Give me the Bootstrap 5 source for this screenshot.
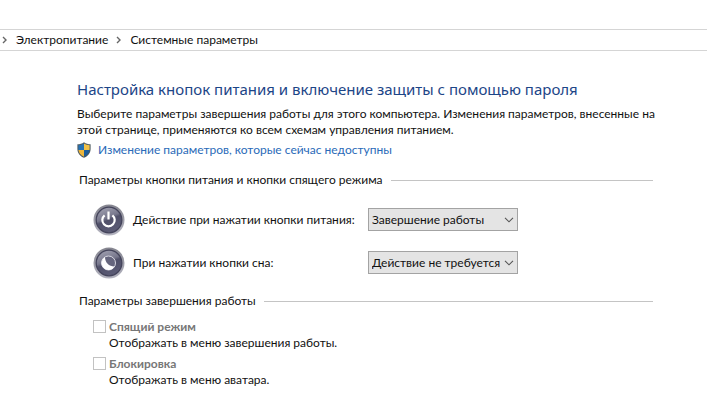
<!DOCTYPE html>
<html lang="ru">
<head>
<meta charset="utf-8">
<meta name="viewport" content="width=device-width, initial-scale=1">
<title>Системные параметры</title>
<link href="https://cdn.jsdelivr.net/npm/bootstrap@5.3.0/dist/css/bootstrap.min.css" rel="stylesheet">
<style>
body { font-family: Lato, "Noto Sans", sans-serif; font-size: 12px; line-height: 16px; color: #111; background: #fff; }
.address-bar { margin-top: 29px; height: 22px; border-top: 1px solid #d5d5d5; border-bottom: 1px solid #d5d5d5; padding-left: 2px; }
.address-bar a { color: #111; }
.sep { width: 5px; height: 8px; margin-right: 9px; fill: none; stroke: #666; stroke-width: 1.4; }
.settings { padding: 26px 48px 8px 77px; }
.page-title { font-family: "Noto Sans", sans-serif; font-size: 15px; line-height: 24px; color: #1c4587; font-weight: 400; margin-bottom: 5px; }
.admin-link { color: #2a6ab8; }
.shield { width: 14px; height: 16px; margin-right: 7px; }
.button-group { padding-top: 10px; }
.shutdown-group { padding-top: 14px; }
.group-head { padding-left: 2px; }
.group-title { font-size: 12px; line-height: 16px; font-weight: 400; }
.group-line { height: 1px; background: #c4c4c4; margin-right: 6px; }
.rows { padding-top: 15px; row-gap: 10px; }
.checks { padding-top: 9px; }
.round-icon { width: 32px; height: 32px; }
.setting-row { height: 33px; }
.setting-label { width: 235px; }
.combo { width: 150px; height: 23px; padding: 0 16px 0 3px; border: 1px solid #a3a3a3; border-radius: 0; font-size: 12px; line-height: 16px; color: #111;
  background: #e4e4e4 url("data:image/svg+xml,%3Csvg xmlns='http://www.w3.org/2000/svg' viewBox='0 0 10 6'%3E%3Cpath d='M1 .8l4 4 4-4' fill='none' stroke='%23555' stroke-width='1.1'/%3E%3C/svg%3E") no-repeat right 3px center / 10px 6px; }
.check { min-height: 0; padding-left: 16px; }
.check .check-box { width: 13px; height: 13px; margin: 2px 0 0 -16px; border: 1px solid #c2c2c2; border-radius: 0; opacity: 1; }
.check .check-box:disabled ~ .check-label { color: #777; opacity: 1; font-weight: 700; line-height: 17px; }
</style>
</head>
<body>
<nav class="address-bar d-flex align-items-center" aria-label="Путь">
  <ol class="list-unstyled d-flex align-items-center mb-0">
    <li class="d-flex align-items-center"><svg class="sep" viewBox="0 0 5 8" aria-hidden="true"><path d="M1 1l3 3-3 3"/></svg><a class="text-decoration-none" href="#">Электропитание</a></li>
    <li class="d-flex align-items-center ms-2"><svg class="sep" viewBox="0 0 5 8" aria-hidden="true"><path d="M1 1l3 3-3 3"/></svg><a class="text-decoration-none" href="#">Системные параметры</a></li>
  </ol>
</nav>
<main class="settings">
  <h1 class="page-title">Настройка кнопок питания и включение защиты с помощью пароля</h1>
  <p class="intro mb-1">Выберите параметры завершения работы для этого компьютера. Изменения параметров, внесенные на этой странице, применяются ко всем схемам управления питанием.</p>
  <a class="admin-link d-inline-flex align-items-center text-decoration-none" href="#">
    <svg class="shield" viewBox="0 0 14 16" aria-hidden="true">
      <clipPath id="shieldClip"><path d="M7 1.600C5.300 2.700 3.300 3.300 1.400 3.300V7c0 3.700 2.500 6.300 5.600 7.700 3.100-1.400 5.600-4 5.600-7.700V3.300C10.700 3.300 8.700 2.700 7 1.600z"/></clipPath>
      <path d="M7 .3C5.200 1.700 2.700 2.300.4 2.300V7c0 4.300 3 7.300 6.600 8.800 3.600-1.500 6.600-4.500 6.600-8.800V2.300C11.300 2.300 8.800 1.700 7 .3z" fill="#4d5a60"/>
      <g clip-path="url(#shieldClip)"><path fill="#2672b5" d="M0 0h7v8H0z"/><path fill="#f2c146" d="M7 0h7v8H7z"/><path fill="#eeb63a" d="M0 8h7v8H0z"/><path fill="#1c5d9c" d="M7 8h7v8H7z"/></g>
    </svg>
    <span>Изменение параметров, которые сейчас недоступны</span>
  </a>

  <section class="button-group">
    <div class="group-head d-flex align-items-center gap-2">
      <h2 class="group-title mb-0">Параметры кнопки питания и кнопки спящего режима</h2>
      <div class="group-line flex-grow-1"></div>
    </div>
    <div class="rows d-grid ps-3">
      <div class="setting-row d-flex align-items-center">
        <svg class="round-icon me-2" viewBox="0 0 32 32" aria-hidden="true">
          <defs>
            <linearGradient id="rim" x2="0" y2="1"><stop stop-color="#85858f"/><stop offset="1" stop-color="#b4b4c0"/></linearGradient>
            <linearGradient id="face" x2=".4" y2="1"><stop stop-color="#a9a9b8"/><stop offset=".5" stop-color="#77778c"/><stop offset=".6" stop-color="#505069"/><stop offset="1" stop-color="#5a5a74"/></linearGradient>
          </defs>
          <circle cx="16" cy="16" r="15.500" fill="url(#rim)"/>
          <circle cx="16" cy="16" r="12.800" fill="url(#face)" stroke="#44445b" stroke-width="1.300"/>
          <path d="M11.600 11.300a6.200 6.200 0 1 0 7.800 0" fill="none" stroke="#fff" stroke-width="2.200"/>
          <path d="M15.500 7.500v8" stroke="#fff" stroke-width="2.200"/>
        </svg>
        <label class="setting-label" for="powerAction">Действие при нажатии кнопки питания:</label>
        <select class="combo form-select" id="powerAction"><option>Завершение работы</option></select>
      </div>
      <div class="setting-row d-flex align-items-center">
        <svg class="round-icon me-2" viewBox="0 0 32 32" aria-hidden="true">
          <circle cx="16" cy="16" r="15.500" fill="url(#rim)"/>
          <circle cx="16" cy="16" r="12.800" fill="url(#face)" stroke="#44445b" stroke-width="1.300"/>
          <circle cx="15.500" cy="16" r="7" fill="#66667e" stroke="#d8d8e2"/>
          <path d="M12 9.900A7 7 0 1 0 21.600 19.400C16 19.500 12 15.500 12 9.900z" fill="#fff"/>
        </svg>
        <label class="setting-label" for="sleepAction">При нажатии кнопки сна:</label>
        <select class="combo form-select" id="sleepAction"><option>Действие не требуется</option></select>
      </div>
    </div>
  </section>

  <section class="shutdown-group">
    <div class="group-head d-flex align-items-center gap-2">
      <h2 class="group-title mb-0">Параметры завершения работы</h2>
      <div class="group-line flex-grow-1"></div>
    </div>
    <div class="checks d-grid ps-3 gap-1">
      <div class="check form-check mb-0">
        <input class="check-box form-check-input" type="checkbox" id="sleepMode" aria-describedby="sleepHelp" disabled>
        <label class="check-label form-check-label d-block" for="sleepMode">Спящий режим</label>
        <div id="sleepHelp">Отображать в меню завершения работы.</div>
      </div>
      <div class="check form-check mb-0">
        <input class="check-box form-check-input" type="checkbox" id="lockMode" aria-describedby="lockHelp" disabled>
        <label class="check-label form-check-label d-block" for="lockMode">Блокировка</label>
        <div id="lockHelp">Отображать в меню аватара.</div>
      </div>
    </div>
  </section>
</main>
<script src="https://cdn.jsdelivr.net/npm/bootstrap@5.3.0/dist/js/bootstrap.bundle.min.js"></script>
</body>
</html>
